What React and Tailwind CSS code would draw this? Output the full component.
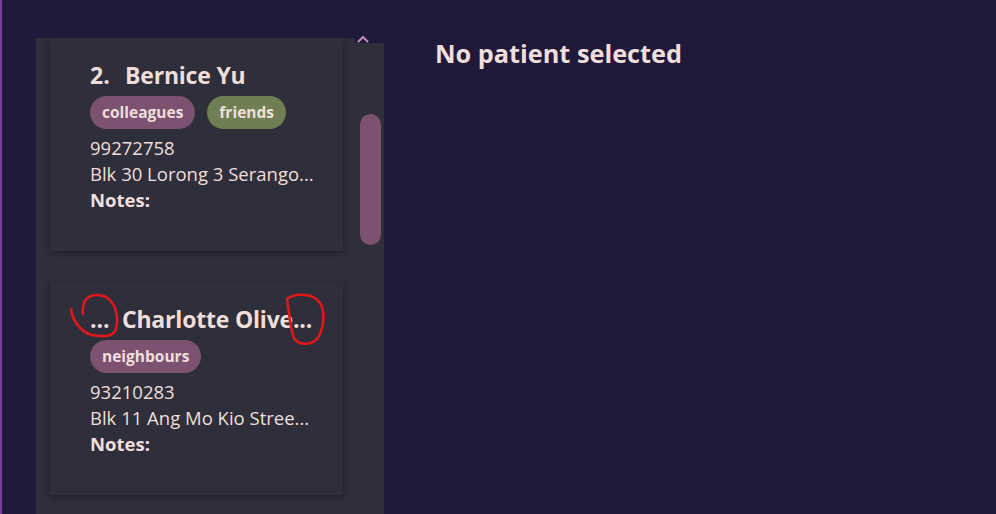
import React from "react";

const patients = [
  {
    index: "2.",
    indexWidth: "w-[35px]",
    name: "Bernice Yu",
    tags: [
      { label: "colleagues", color: "bg-[#7d5170]" },
      { label: "friends", color: "bg-[#6f7f53]" },
    ],
    phone: "99272758",
    address: "Blk 30 Lorong 3 Serango...",
  },
  {
    index: "...",
    indexWidth: "w-[32px]",
    name: "Charlotte Olive...",
    tags: [{ label: "neighbours", color: "bg-[#7d5170]" }],
    phone: "93210283",
    address: "Blk 11 Ang Mo Kio Stree...",
  },
];

function PatientCard({ p, children }) {
  return (
    <div className="relative shrink-0 w-[293px] h-[213px] bg-[#2f2e3b] shadow-[0_2px_6px_rgba(0,0,0,0.35)] pt-[22px] pl-[40px] pr-[20px]">
      <div className="flex items-baseline text-[23px] leading-[30px] font-bold whitespace-nowrap">
        <span className={`${p.indexWidth} shrink-0`}>{p.index}</span>
        <span className="tracking-[-0.2px]">{p.name}</span>
      </div>
      <div className="flex gap-3 mt-[6px]">
        {p.tags.map((t) => (
          <span
            key={t.label}
            className={`${t.color} h-[33px] px-3 rounded-full text-[15.5px] font-bold leading-[33px]`}
          >
            {t.label}
          </span>
        ))}
      </div>
      <div className="mt-[6px] text-[18.5px] leading-[26px]">{p.phone}</div>
      <div className="text-[18.5px] leading-[26px] whitespace-nowrap">{p.address}</div>
      <div className="text-[18.5px] leading-[26px] font-bold">Notes:</div>
      {children}
    </div>
  );
}

export default function App() {
  return (
    <div
      className="h-screen w-full overflow-hidden bg-[#201a3a] flex text-[#efdfdc]"
      style={{ fontFamily: '"Open Sans", "Noto Sans", sans-serif' }}
    >
      <div className="w-[2px] shrink-0 bg-[#7a3e9c]" />

      {/* patient list panel */}
      <div className="ml-[34px] mt-[38px] flex w-[348px] shrink-0">
        <div className="w-[319px] bg-[#2f2e3b] pl-[14px] flex flex-col gap-[31px] overflow-hidden">
          <PatientCard p={patients[0]} />
          <PatientCard p={patients[1]}>
            <svg
              className="absolute left-[-50px] top-[-283px] pointer-events-none"
              width="400"
              height="514"
              viewBox="0 0 400 514"
              fill="none"
              stroke="#e0181a"
              strokeWidth="2.6"
              strokeLinecap="round"
              strokeLinejoin="round"
            >
              <path d="M71 310 C 72 320, 80 333, 92 336 C 104 338, 114 338, 116 330 C 119 318, 116 304, 106 298 C 97 294, 87 296, 84 304 C 82 309, 83 313, 83 315" />
              <path d="M287 300 C 289 312, 290 330, 294 339 C 298 346, 310 347, 317 340 C 323 332, 325 318, 322 308 C 318 298, 308 295, 297 296 C 292 297, 289 298, 287 300" />
            </svg>
          </PatientCard>
        </div>

        {/* scrollbar */}
        <div className="relative w-[29px] flex flex-col">
          <svg className="absolute left-[2px] top-[-2px]" width="12" height="7" viewBox="0 0 12 7">
            <path d="M1 6 L6 1 L11 6" fill="none" stroke="#c98cbf" strokeWidth="2" />
          </svg>
          <div className="h-[5px] shrink-0" />
          <div className="flex-1 bg-[#2f2e3b] pt-[71px] pl-[5px]">
            <div className="w-[21px] h-[131px] rounded-full bg-[#7d5170]" />
          </div>
        </div>
      </div>

      <div className="ml-[51px] pt-[36px]">
        <h1 className="text-[25.3px] leading-[34px] font-bold whitespace-nowrap">No patient selected</h1>
      </div>
    </div>
  );
}
